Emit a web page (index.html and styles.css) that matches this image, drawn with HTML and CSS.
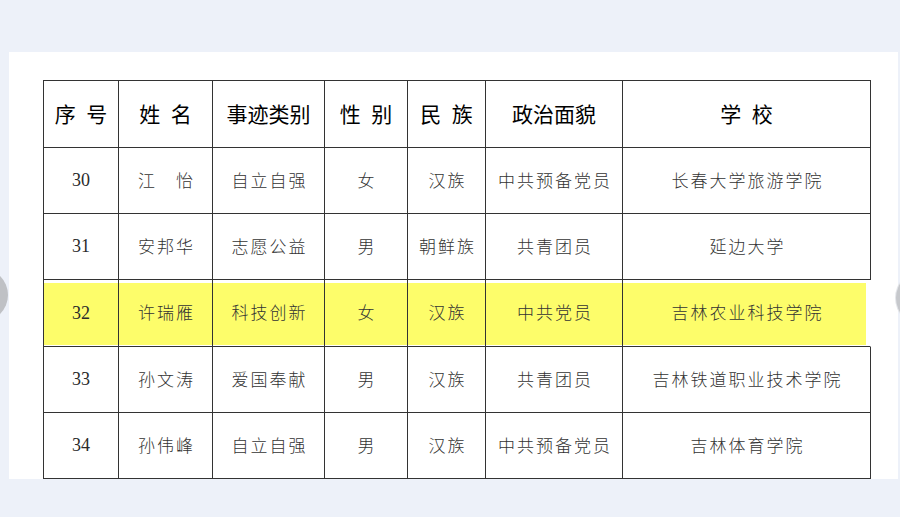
FILE: index.html
```html
<!DOCTYPE html>
<html lang="zh-CN">
<head>
<meta charset="utf-8">
<title>名单</title>
<link rel="stylesheet" href="styles.css">
</head>
<body>
<div class="panel">
  <table class="list">
    <colgroup>
      <col class="c1"><col class="c2"><col class="c3"><col class="c4"><col class="c5"><col class="c6"><col class="c7">
    </colgroup>
    <thead>
      <tr class="head">
        <th>序 号</th><th>姓 名</th><th>事迹类别</th><th>性 别</th><th>民 族</th><th>政治面貌</th><th>学 校</th>
      </tr>
    </thead>
    <tbody>
      <tr><td class="num">30</td><td>江　怡</td><td>自立自强</td><td>女</td><td>汉族</td><td>中共预备党员</td><td>长春大学旅游学院</td></tr>
      <tr><td class="num">31</td><td>安邦华</td><td>志愿公益</td><td>男</td><td>朝鲜族</td><td>共青团员</td><td>延边大学</td></tr>
      <tr class="hl tall"><td class="num">32</td><td>许瑞雁</td><td>科技创新</td><td>女</td><td>汉族</td><td>中共党员</td><td>吉林农业科技学院</td></tr>
      <tr><td class="num">33</td><td>孙文涛</td><td>爱国奉献</td><td>男</td><td>汉族</td><td>共青团员</td><td>吉林铁道职业技术学院</td></tr>
      <tr><td class="num">34</td><td>孙伟峰</td><td>自立自强</td><td>男</td><td>汉族</td><td>中共预备党员</td><td>吉林体育学院</td></tr>
    </tbody>
  </table>
</div>
<div class="nav nav-left"></div>
<div class="nav nav-right"></div>
</body>
</html>
```

FILE: styles.css
```css
html, body {
  margin: 0;
  padding: 0;
}
body {
  background: #edf1f9;
  width: 900px;
  height: 517px;
  overflow: hidden;
  position: relative;
  font-family: "Noto Sans CJK SC", "Noto Sans", sans-serif;
}
.panel {
  margin: 52px 0 0 9px;
  width: 889px;
  height: 427px;
  box-sizing: border-box;
  padding: 28px 0 0 34px;
  background: #fff;
  overflow: hidden;
}
.list {
  border-collapse: separate;
  border-spacing: 0;
  table-layout: fixed;
  width: 827px;
  border-top: 1px solid #333;
  border-left: 1px solid #333;
}
.c1 { width: 75px; }
.c2 { width: 94px; }
.c3 { width: 112px; }
.c4 { width: 83px; }
.c5 { width: 78px; }
.c6 { width: 137px; }
.c7 { width: 248px; }
.list th,
.list td {
  border-right: 1px solid #333;
  border-bottom: 1px solid #333;
  padding: 0 0 3px;
  text-align: center;
  vertical-align: middle;
  white-space: nowrap;
}
.list th {
  font-size: 21px;
  font-weight: 400;
  color: #000;
  word-spacing: 6px;
}
.head { height: 67px; }
.list tbody tr { height: 66px; }
.list tbody tr.tall { height: 67px; }
.list td {
  font-size: 17px;
  font-weight: 300;
  color: #333;
  letter-spacing: 2px;
  text-indent: 2px;
}
.list td.num {
  font-family: "Liberation Serif", "Times New Roman", serif;
  font-weight: 400;
  letter-spacing: 0;
  text-indent: 0;
  font-size: 18px;
  color: #2a2a2a;
  padding: 0;
}
.hl td {
  background: linear-gradient(#fff 0 3px, #fdfd6a 3px calc(100% - 1px), #fff calc(100% - 1px));
}
.hl td:last-child {
  border-right-color: #fff;
  background:
    linear-gradient(to right, transparent calc(100% - 4px), #fff calc(100% - 4px)),
    linear-gradient(#fff 0 3px, #fdfd6a 3px calc(100% - 1px), #fff calc(100% - 1px));
}
.nav {
  position: absolute;
  width: 54px;
  height: 54px;
  border-radius: 50%;
  background: #bfc1c5;
}
.nav-left {
  left: -46px;
  top: 268px;
}
.nav-right {
  left: 896px;
  top: 271px;
  background: #c6c8cc;
  box-shadow: 0 0 0 1px #e4e6ea;
}
```
